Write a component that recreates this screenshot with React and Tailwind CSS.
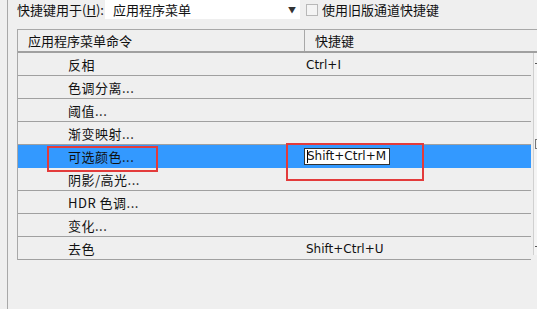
const rows = [
  { name: '反相', key: 'Ctrl+I' },
  { name: '色调分离...', key: '' },
  { name: '阈值...', key: '' },
  { name: '渐变映射...', key: '' },
  { name: '可选颜色...', key: 'Shift+Ctrl+M', selected: true },
  { name: '阴影/高光...', key: '' },
  { name: 'HDR 色调...', key: '' },
  { name: '变化...', key: '' },
  { name: '去色', key: 'Shift+Ctrl+U' },
];

const cjk = { fontFamily: '"Noto Sans CJK SC", "DejaVu Sans", sans-serif' };
const latin = { fontFamily: 'Tahoma, "DejaVu Sans", "Noto Sans CJK SC", sans-serif' };

export default function App() {
  return (
    <div className="relative w-[537px] h-[309px] overflow-hidden bg-[#efefef] text-[13px] text-[#111]" style={cjk}>
      <div className="flex h-full">
        <div className="w-[7px] shrink-0" />
        <div className="w-px shrink-0 bg-[#a8a8a8]" />
        <div className="flex-1 pl-[9px]">
          {/* top bar */}
          <div className="flex items-center h-[19px]">
            <span className="w-[88px] leading-none">
              快捷键用于(<span className="underline">H</span>):
            </span>
            <div className="flex items-center justify-between w-[195px] h-[19px] bg-white pl-[8px] pr-[4px]">
              <span className="leading-none">应用程序菜单</span>
              <span className="text-[8px] text-[#333]">▼</span>
            </div>
            <div className="ml-[6px] w-[12px] h-[12px] border border-[#b8b8b8] bg-[#f4f4f4]" />
            <span className="ml-[4px] leading-none">使用旧版通道快捷键</span>
          </div>

          {/* table */}
          <div className="mt-[10px] border-t border-[#a8a8a8] border-l">
            <div className="flex items-center h-[23px] border-b-2 border-[#a0a0a0]">
              <div className="w-[287px] pl-[10px] h-full flex items-center border-r border-[#a8a8a8]">应用程序菜单命令</div>
              <div className="pl-[10px]">快捷键</div>
            </div>
            <div className="flex">
              <div className="w-[513px]">
                {rows.map((r) => (
                  <div
                    key={r.name}
                    className={`flex items-center h-[23px] border-b border-[#a0a0a0] ${r.selected ? 'bg-[#3399ff] border-b-[#3399ff]' : ''}`}
                  >
                    <div className="w-[287px] pl-[50px] pt-px tracking-[0.5px]">{r.name}</div>
                    {r.selected ? (
                      <div className="relative -ml-px w-[86px] h-[17px] bg-white border border-[#333] flex items-center pl-[2px] text-[12px]" style={latin}>
                        <span className="absolute left-[2px] top-[1px] w-px h-[13px] bg-black" />
                        {r.key}
                      </div>
                    ) : (
                      <div className="pl-[1px] pt-px text-[12px]" style={latin}>{r.key}</div>
                    )}
                  </div>
                ))}
              </div>
              <div className="ml-[2px] w-[6px] border-l border-[#d0d0d0] bg-[#f4f4f4] h-[202px] relative">
                <div className="absolute top-[10px] left-[1px] w-[4px] h-px bg-[#555]" />
                <div className="absolute top-[86px] left-[1px] w-[5px] h-[10px] border border-[#777]" />
                <div className="absolute top-[193px] left-[1px] w-[4px] h-px bg-[#555]" />
              </div>
            </div>
          </div>
        </div>
      </div>

      {/* annotation boxes */}
      <div className="absolute left-[47px] top-[146px] w-[111px] h-[26px] border-2 border-[#e33b3b]" />
      <div className="absolute left-[286px] top-[143px] w-[138px] h-[38px] border-2 border-[#e33b3b]" />
    </div>
  );
}
